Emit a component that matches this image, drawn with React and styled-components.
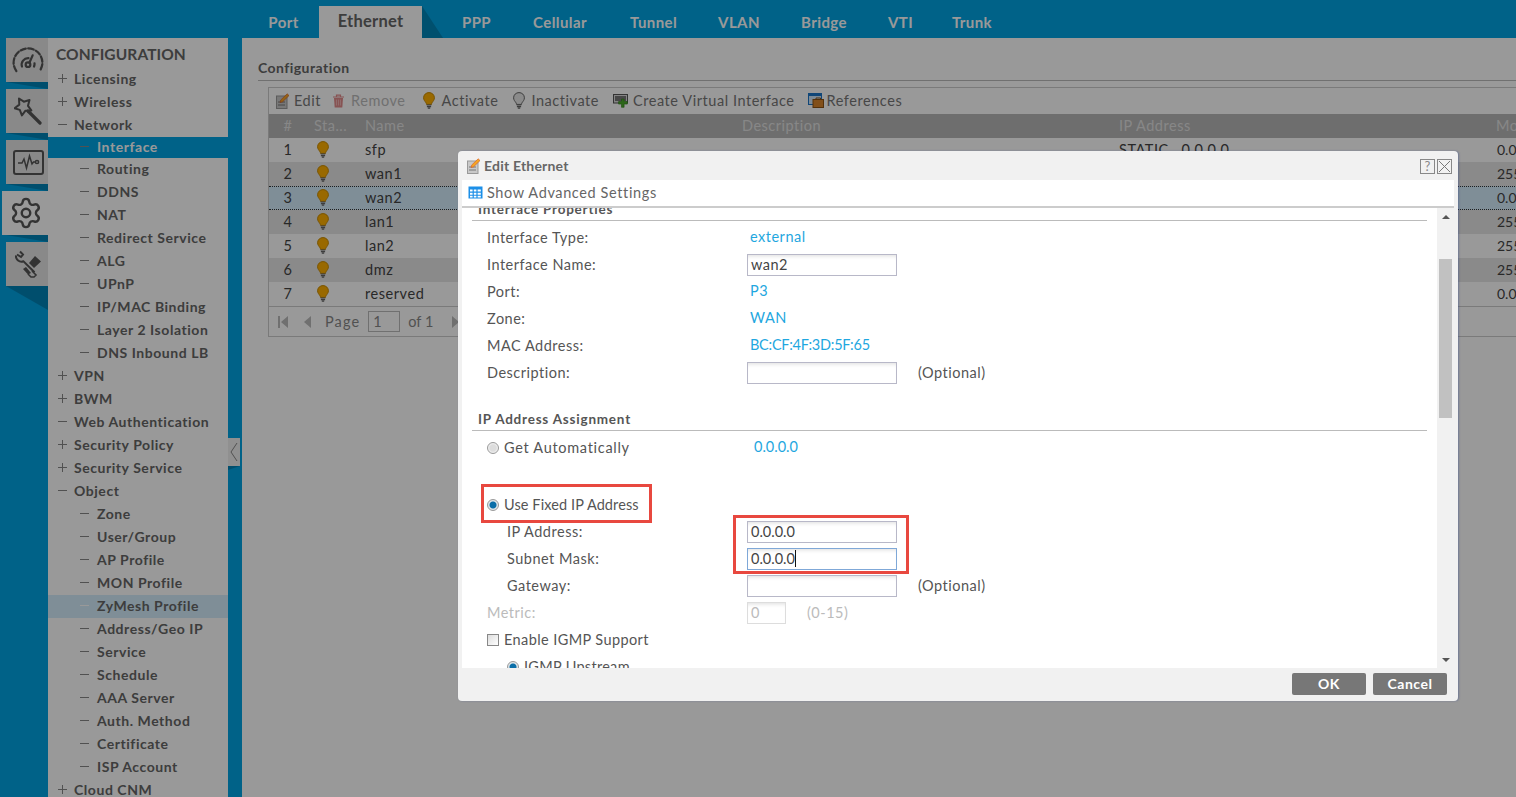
import React from "react";
import styled, { createGlobalStyle } from "styled-components";
import { Settings } from "lucide-react";

const Global = createGlobalStyle`
  html, body { margin: 0; padding: 0; background: #fff; }
  body { font-family: Lato, "Open Sans", sans-serif; color: #555; }
`;

const Page = styled.div`
  position: relative; width: 1516px; height: 797px; overflow: hidden;
  background: #00a3e3; display: flex; flex-direction: column;
`;
const TabBar = styled.div`
  height: 38px; padding-left: 248px; display: flex; align-items: flex-end; flex: none;
`;
const Tab = styled.div`
  position: relative; width: ${p => p.$w}px; height: 32px; flex: none;
  display: flex; align-items: center; justify-content: center;
  margin-right: ${p => (p.$active ? 21 : 0)}px;
  background: ${p => (p.$active ? "#fff" : "transparent")};
  color: ${p => (p.$active ? "#666" : "#fff")};
  font-size: ${p => (p.$active ? 16.5 : 15)}px; font-weight: 700;
  letter-spacing: ${p => (p.$active ? 0.25 : 0.4)}px;
  padding-bottom: ${p => (p.$active ? 3 : 0)}px; box-sizing: border-box;
  ${p => p.$active && `&::after { content: ""; position: absolute; left: 100%; top: 0; width: 21px; height: 32px;
    background: #0085b8; clip-path: polygon(0 0, 100% 100%, 0 100%); }`}
`;
const Main = styled.div`
  flex: 1; display: flex; min-height: 0;
`;
const Rail = styled.div`
  width: 48px; flex: none; display: flex; flex-direction: column; align-items: flex-end; gap: 7px;
`;
const RailTile = styled.div`
  position: relative; height: 44px; flex: none;
  width: ${p => (p.$active ? 46 : 42)}px;
  background: ${p => (p.$active ? "#fff" : "#e4e4e4")};
  display: flex; align-items: center; justify-content: center; color: #555;
  padding-left: ${p => (p.$active ? 2 : 2)}px; box-sizing: border-box;
  &::after {
    content: ""; position: absolute; left: ${p => (p.$active ? 4 : 0)}px; top: 100%; width: 42px;
    height: ${p => (p.$last ? 24 : 7)}px; background: #0083b6;
    clip-path: polygon(0 0, 100% 0, 100% 100%);
  }
`;
const Nav = styled.div`
  width: 180px; flex: none; background: #fff; overflow: hidden;
`;
const NavTitle = styled.div`
  height: 30px; padding: 1px 0 0 8px; box-sizing: border-box; font-size: 15.5px; font-weight: 700; color: #666;
  display: flex; align-items: center; letter-spacing: 0.1px;
`;
const NavRow = styled.div`
  height: ${p => (p.$active ? 21 : 23)}px; display: flex; align-items: center; box-sizing: border-box;
  padding-left: ${p => (p.$sub ? 32 : 10)}px; padding-bottom: 2px;
  font-size: 14px; font-weight: 700; letter-spacing: 0.55px;
  background: ${p => (p.$active ? "#00a3e3" : p.$hover ? "#d4edfc" : "transparent")};
  color: ${p => (p.$active ? "#fff" : "#666")};
`;
const Marker = styled.span`
  position: relative; width: 9px; height: 9px; flex: none; margin-right: ${p => (p.$sub ? 8 : 7)}px;
  &::before { content: ""; position: absolute; left: 0; right: 0; top: 4px; height: 1px;
    background: ${p => (p.$faint ? "#fff" : "#888")}; }
  ${p => p.$plus && `&::after { content: ""; position: absolute; top: 0; bottom: 0; left: 4px; width: 1px; background: #888; }`}
`;
const Strip = styled.div`
  width: 14px; flex: none;
`;
const Handle = styled.div`
  position: relative; width: 12px; height: 28px; margin-top: 400px; background: #f0f0f0;
  display: flex; align-items: center; justify-content: center; color: #888;
  &::after { content: ""; position: absolute; left: 0; top: 100%; width: 12px; height: 4px;
    background: #0083b6; clip-path: polygon(0 0, 100% 0, 0 100%); }
`;
const Content = styled.div`
  flex: 1; min-width: 0; background: #fff; padding: 20px 0 0 16px; overflow: hidden;
`;
const Heading = styled.div`
  height: 22px; box-sizing: content-box; border-bottom: 1px solid #bbb; font-size: 14px; font-weight: 700; color: #666;
  letter-spacing: 0.45px; display: flex; align-items: flex-start; line-height: 20px;
`;
const Panel = styled.div`
  margin: 6px 0 0 10px; width: 1300px; border: 1px solid #ccc; box-sizing: border-box;
`;
const Toolbar = styled.div`
  height: 26px; display: flex; align-items: center; padding: 0 0 1px 7px; box-sizing: border-box;
  font-size: 14.5px; color: #777; letter-spacing: 0.55px;
`;
const ToolItem = styled.div`
  display: flex; align-items: center; gap: ${p => p.$icon}px; margin-right: ${p => p.$gap}px;
  color: ${p => (p.$off ? "#bbb" : "#777")};
`;
const TableHead = styled.div`
  height: 24px; background: #b7b7b7; color: #e2e2e2; display: grid; padding-bottom: 1px; box-sizing: border-box;
  grid-template-columns: 38px 51px 377px 377px 377px 1fr; align-items: center;
  font-size: 14.5px; letter-spacing: 0.5px;
`;
const TableRow = styled.div`
  height: 24px; box-sizing: border-box; display: grid; padding-bottom: 1px;
  grid-template-columns: 38px 51px 377px 377px 377px 1fr; align-items: center;
  font-size: 14.5px; color: #444; letter-spacing: 0.55px;
  background: ${p => (p.$selected ? "#d4edfc" : p.$alt ? "#e6e6e6" : "#fff")};
  ${p => p.$selected && "border-top: 1px dotted #333; border-bottom: 1px dotted #333;"}
`;
const Num = styled.div` text-align: center; `;
const Cell = styled.div` padding-left: 7px; white-space: nowrap; `;
const MaskCell = styled(Cell)` padding-left: 8px; letter-spacing: 0; font-size: 14px; `;
const IconCell = styled.div` padding-left: 10px; display: flex; `;
const Pager = styled.div`
  height: 29px; border-top: 1px solid #ccc; display: flex; align-items: center;
  font-size: 14.5px; color: #888; letter-spacing: 0.5px;
`;
const PagerLabel = styled.span`
  margin-left: ${p => p.$ml}px; letter-spacing: ${p => p.$ls}px;
`;
const PagerBox = styled.div`
  width: 26px; height: 19px; border: 1px solid #bbb; margin: 0 8px 0 8px; padding-left: 4px;
  line-height: 19px; box-sizing: content-box;
`;
const PagerIcon = styled.svg` flex: none; margin-left: ${p => p.$ml}px; `;
const Overlay = styled.div`
  position: absolute; inset: 0; background: rgba(0, 0, 0, 0.4);
`;
const Dialog = styled.div`
  position: absolute; left: 458px; top: 151px; width: 1000px; height: 550px;
  background: #f1f1f1; border-radius: 4px; box-shadow: 1px 0 2px rgba(60,80,140,.45);
  display: flex; flex-direction: column; color: #444;
`;
const DialogHead = styled.div`
  height: 29px; flex: none; display: flex; align-items: center; padding: 0 6px 0 9px;
  font-size: 14px; font-weight: 700; color: #666; letter-spacing: 0.2px;
`;
const DialogTitle = styled.div` flex: 1; margin-left: 3px; `;
const HeadBtn = styled.div`
  width: 13px; height: 13px; border: 1px solid #888; margin: 2px 0 0 2px; color: #888;
  font-size: 13px; line-height: 13px; text-align: center; font-weight: 400;
  display: flex; align-items: center; justify-content: center;
`;
const DialogTools = styled.div`
  height: 26px; flex: none; margin: 0 4px; background: #fff; border-bottom: 2px solid #ccc;
  display: flex; align-items: center; padding: 0 0 2px 6px; gap: 4px; box-sizing: content-box;
  font-size: 14.5px; color: #666; letter-spacing: 0.62px; height: 24px;
`;
const DialogBody = styled.div`
  height: 460px; flex: none; margin: 0 4px; display: flex;
`;
const Form = styled.div`
  flex: 1; min-width: 0; background: #fff; overflow: hidden;
`;
const Scrollbar = styled.div`
  width: 17px; flex: none; display: flex; flex-direction: column; align-items: center; position: relative;
`;
const ArrowUp = styled.div`
  margin-top: 7px; width: 0; height: 0; border: 4px solid transparent; border-top: 0; border-bottom: 4px solid #555;
`;
const Thumb = styled.div`
  margin-top: 40px; width: 13px; height: 159px; background: #c1c1c1; flex: none;
`;
const ArrowDown = styled.div`
  margin-top: auto; margin-bottom: 6px; width: 0; height: 0; border: 4px solid transparent; border-bottom: 0; border-top: 4px solid #555;
`;
const Section = styled.div`
  margin: ${p => p.$top}px 10px ${p => p.$bottom}px; padding: 0 0 2px 6px; height: 21px; box-sizing: content-box; height: 19px; border-bottom: 1px solid #bbb;
  font-size: 13.5px; font-weight: 700; color: #555; letter-spacing: 0.78px; display: flex; align-items: center;
`;
const Row = styled.div`
  height: 27px; display: grid; align-items: center;
  padding-left: ${p => p.$indent + 25}px; margin-top: ${p => p.$top || 0}px;
  grid-template-columns: ${p => 260 - p.$indent}px 171px auto; justify-content: start;
  font-size: 14.5px; color: ${p => (p.$off ? "#bbb" : "#555")}; letter-spacing: 0.5px;
`;
const Value = styled.div`
  color: #1fa7e0; padding: 0 0 2px ${p => p.$pad}px; white-space: nowrap;
  letter-spacing: ${p => p.$ls ?? 0.5}px;
`;
const Field = styled.div`
  width: ${p => p.$w || 150}px; height: 22px; box-sizing: border-box; padding-left: 3px;
  border: 1px solid ${p => (p.$focus ? "#7fa8d8" : p.$off ? "#ddd" : "#b8b8c8")};
  box-shadow: inset 0 4px 4px -3px #ddd; line-height: 19px; color: ${p => (p.$off ? "#bbb" : "#444")};
  display: flex; align-items: center; letter-spacing: ${p => p.$ls ?? 0.5}px;
`;
const FieldGroup = styled.div` display: flex; align-items: center; gap: 21px; `;
const Caret = styled.span` width: 1px; height: 17px; background: #111; `;
const Hint = styled.div` white-space: nowrap; color: ${p => (p.$off ? "#bbb" : "#555")}; `;
const Choice = styled.div`
  display: flex; align-items: center; gap: 5px; white-space: nowrap; letter-spacing: ${p => p.$ls ?? 0.5}px;
`;
const Radio = styled.span`
  width: 12px; height: 12px; border-radius: 50%; box-sizing: border-box; flex: none;
  border: 1px solid #999; background: ${p => p.$on
    ? "radial-gradient(circle, #0a6ea8 0 3px, #dfe6ea 4px)" : "radial-gradient(circle, #ddd 0 3px, #f2f2f2 5px)"};
`;
const Check = styled.span`
  width: 12px; height: 12px; border: 1px solid #888; box-sizing: border-box; flex: none;
  background: linear-gradient(135deg, #ddd, #fff);
`;
const DialogFoot = styled.div`
  flex: 1; display: flex; justify-content: flex-end; gap: 7px; padding: 5px 11px 0 0;
`;
const Btn = styled.div`
  width: 74px; height: 22px; background: #777; border-radius: 2px; color: #fff; padding-bottom: 2px; box-sizing: border-box;
  font-size: 14px; font-weight: 700; display: flex; align-items: center; justify-content: center; letter-spacing: 0.5px;
`;
const RedFrame = styled.div`
  position: absolute; box-sizing: border-box; border: 3px solid #e8483f;
  left: ${p => p.$x}px; top: ${p => p.$y}px; width: ${p => p.$w}px; height: ${p => p.$h}px;
`;

const Bulb = ({ off }) => (
  <svg width="12" height="18" viewBox="0 0 12 18">
    <path d="M6 .6C2.9.6.6 2.9.6 5.8c0 2.3 1.4 3.4 2.4 5 .4.7.5 1.1.5 1.6h5c0-.5.1-.9.5-1.6 1-1.6 2.400-2.700 2.400-5C11.400 2.900 9.100.6 6 .6z"
      fill={off ? "#e8e8e8" : "#ffb000"} stroke={off ? "#666" : "#c98a00"} strokeWidth="1" />
    <path d="M3.7 13h4.6M3.9 14.6h4.2M4.8 16.2h2.4" stroke="#666" strokeWidth="1.2" />
  </svg>
);
const EditIcon = () => (
  <svg width="14" height="16" viewBox="0 0 14 16">
    <rect x="0.5" y="3" width="10.5" height="12.5" fill="#c9c9c9" stroke="#999" />
    <path d="M2 9h7M2 12h7" stroke="#777" strokeWidth="1" />
    <path d="M4 9.5l.8-2.600L11.200.8 13 2.600 6.600 8.800z" fill="#f5a623" stroke="#d9541e" strokeWidth=".6" />
  </svg>
);
const TrashIcon = () => (
  <svg width="13" height="14" viewBox="0 0 13 14">
    <path d="M1 3h11M4.500 3V1.200h4V3" stroke="#e28a8a" strokeWidth="1.2" fill="none" />
    <path d="M2 4h9l-.7 9.500H2.700z" fill="#e28a8a" />
    <path d="M4.500 5.500v6M6.500 5.500v6M8.500 5.500v6" stroke="#f5c5c5" strokeWidth=".7" />
  </svg>
);
const VirtualIcon = () => (
  <svg width="16" height="14" viewBox="0 0 16 14">
    <rect x=".5" y=".5" width="14" height="8.500" fill="#ddd" stroke="#555" />
    <rect x="2" y="2" width="11" height="5" fill="#777" />
    <path d="M8.500 5h2.600v2.500h3.200v2.600h-3.200v3.200H8.500v-3.200H5.600V7.500h2.900z" fill="#4caa2a" stroke="#2d7d17" strokeWidth=".6" />
  </svg>
);
const RefIcon = () => (
  <svg width="16" height="15" viewBox="0 0 16 15">
    <rect x=".5" y=".5" width="13" height="11" fill="#cfe6fb" stroke="#1c76c8" />
    <rect x=".5" y=".5" width="13" height="2.500" fill="#1c76c8" />
    <rect x="5" y="6.500" width="10.500" height="8" fill="#d9842a" stroke="#8d5213" />
    <path d="M8 6.500V5h4.500v1.500" stroke="#8d5213" fill="none" />
  </svg>
);
const TableIcon = () => (
  <svg width="15" height="13" viewBox="0 0 15 13">
    <rect x=".5" y=".5" width="14" height="12" fill="#1c8fe8" />
    <path d="M2 3.500h2.600v2H2zM5.800 3.500h2.600v2H5.800zM9.600 3.500h3.200v2H9.600zM2 6.800h2.600v2H2zM5.800 6.800h2.600v2H5.800zM9.600 6.800h3.200v2H9.600zM2 9.800h2.600v1.600H2zM5.800 9.800h2.600v1.600H5.800zM9.600 9.800h3.200v1.600H9.600z" fill="#fff" />
  </svg>
);
const GaugeIcon = () => (
  <svg width="32" height="26" viewBox="0 0 34 28" fill="none" stroke="#555" strokeWidth="2.400" strokeLinecap="round">
    <path d="M4.500 26C2.500 23 1.500 20 1.500 17 1.500 8.400 8.400 1.500 17 1.500S32.500 8.400 32.500 17c0 3-1 6-3 9" strokeDasharray="6 2.500" />
    <path d="M10.500 21a7 7 0 0 1 7-9" />
    <path d="M24 17.500a7 7 0 0 1-.5 3.500" />
    <circle cx="17" cy="19" r="2.500" />
    <path d="M18.500 17l3.500-8" />
  </svg>
);
const WandIcon = () => (
  <svg width="28" height="28" viewBox="0 0 28 28" fill="none" stroke="#555" strokeWidth="2" strokeLinejoin="round" strokeLinecap="round">
    <path d="M5 1.500l4.800 3.200 5.700-1.700-1.500 5.800 3.300 4.600-5.800.3-3.600 4.700-2.100-5.500L.6 11.200l4.700-3.600z" />
    <path d="M14 14l12 12" strokeWidth="3.200" />
  </svg>
);
const PulseIcon = () => (
  <svg width="31" height="25" viewBox="0 0 31 25" fill="none" stroke="#555">
    <rect x="1" y="1" width="29" height="23" rx="2" strokeWidth="2" />
    <path d="M5 13h4l2-4 2.500 9 3-12 2.500 8 1.500-2h2" strokeWidth="1.500" />
    <circle cx="24" cy="12" r="1.600" strokeWidth="1.500" />
  </svg>
);
const ToolsIcon = () => (
  <svg width="28" height="28" viewBox="0 0 28 28">
    <path d="M2 5.500a5.500 5.500 0 0 0 7.500 5.800l11 11" fill="none" stroke="#555" strokeWidth="2" />
    <path d="M3 4.500L7 7l2-2.500L6 1.500" fill="none" stroke="#555" strokeWidth="2" />
    <path d="M15 13l6-7 6 5.500-7 6.500z" fill="#555" />
    <path d="M9 19l5 5.500 3-1.500-5-6z" fill="#555" />
    <path d="M14 24l3 3h3l2-2-4-4" fill="none" stroke="#555" strokeWidth="1.600" />
  </svg>
);

const tabs = [["Port", 71], ["Ethernet", 103, true], ["PPP", 67], ["Cellular", 100], ["Tunnel", 87], ["VLAN", 84], ["Bridge", 86], ["VTI", 67], ["Trunk", 76]];
const nav = [
  ["Licensing", "plus"], ["Wireless", "plus"], ["Network", "minus"],
  ["Interface", "sub", "active"], ["Routing", "sub"], ["DDNS", "sub"], ["NAT", "sub"], ["Redirect Service", "sub"],
  ["ALG", "sub"], ["UPnP", "sub"], ["IP/MAC Binding", "sub"], ["Layer 2 Isolation", "sub"], ["DNS Inbound LB", "sub"],
  ["VPN", "plus"], ["BWM", "plus"], ["Web Authentication", "minus"], ["Security Policy", "plus"], ["Security Service", "plus"],
  ["Object", "minus"], ["Zone", "sub"], ["User/Group", "sub"], ["AP Profile", "sub"], ["MON Profile", "sub"],
  ["ZyMesh Profile", "sub", "hover"], ["Address/Geo IP", "sub"], ["Service", "sub"], ["Schedule", "sub"], ["AAA Server", "sub"],
  ["Auth. Method", "sub"], ["Certificate", "sub"], ["ISP Account", "sub"], ["Cloud CNM", "plus"],
];
const rows = [["sfp", "0.0"], ["wan1", "255"], ["wan2", "0.0"], ["lan1", "255"], ["lan2", "255"], ["dmz", "255"], ["reserved", "0.0"]];
const rail = [<GaugeIcon />, <WandIcon />, <PulseIcon />, <Settings size={34} strokeWidth={1.7} />, <ToolsIcon />];

export default function App() {
  return (
    <Page>
      <Global />
      <TabBar>
        {tabs.map(([t, w, a]) => <Tab key={t} $w={w} $active={a}>{t}</Tab>)}
      </TabBar>
      <Main>
        <Rail>
          {rail.map((ic, i) => <RailTile key={i} $active={i === 3} $last={i === 4}>{ic}</RailTile>)}
        </Rail>
        <Nav>
          <NavTitle>CONFIGURATION</NavTitle>
          {nav.map(([t, k, s]) => (
            <NavRow key={t} $sub={k === "sub"} $active={s === "active"} $hover={s === "hover"}>
              <Marker $plus={k === "plus"} $sub={k === "sub"} $faint={s === "hover"} />{t}
            </NavRow>
          ))}
        </Nav>
        <Strip>
          <Handle>
            <svg width="8" height="20" viewBox="0 0 8 20"><path d="M7 1L1 10l6 9" fill="none" stroke="#888" /></svg>
          </Handle>
        </Strip>
        <Content>
          <Heading>Configuration</Heading>
          <Panel>
            <Toolbar>
              <ToolItem $icon={4} $gap={11}><EditIcon />Edit</ToolItem>
              <ToolItem $icon={6} $gap={17} $off><TrashIcon />Remove</ToolItem>
              <ToolItem $icon={7} $gap={15}><Bulb />Activate</ToolItem>
              <ToolItem $icon={6} $gap={14}><Bulb off />Inactivate</ToolItem>
              <ToolItem $icon={4} $gap={13}><VirtualIcon />Create Virtual Interface</ToolItem>
              <ToolItem $icon={3} $gap={0}><RefIcon />References</ToolItem>
            </Toolbar>
            <TableHead>
              <Num>#</Num><Cell>Sta...</Cell><Cell>Name</Cell><Cell>Description</Cell><Cell>IP Address</Cell><Cell>Mo</Cell>
            </TableHead>
            {rows.map(([n, m], i) => (
              <TableRow key={n} $alt={i % 2 === 1} $selected={i === 2}>
                <Num>{i + 1}</Num>
                <IconCell><Bulb /></IconCell>
                <Cell>{n}</Cell><Cell />
                <Cell>{i === 0 ? "STATIC\u00a0\u00a0\u00a00.0.0.0" : ""}</Cell>
                <MaskCell>{m}</MaskCell>
              </TableRow>
            ))}
            <Pager>
              <PagerIcon $ml={8} width="12" height="14" viewBox="0 0 12 14"><path d="M1 1h2v12H1zM11 1v12L4 7z" fill="#bbb" /></PagerIcon>
              <PagerIcon $ml={14} width="9" height="14" viewBox="0 0 9 14"><path d="M8 1v12L1 7z" fill="#bbb" /></PagerIcon>
              <PagerLabel $ml={13} $ls={1.1}>Page</PagerLabel>
              <PagerBox>1</PagerBox>
              <PagerLabel $ml={0} $ls={0.1}>of 1</PagerLabel>
              <PagerIcon $ml={17} width="9" height="14" viewBox="0 0 9 14"><path d="M1 1v12l7-6z" fill="#bbb" /></PagerIcon>
            </Pager>
          </Panel>
        </Content>
      </Main>
      <Overlay />
      <Dialog>
        <DialogHead>
          <EditIcon />
          <DialogTitle>Edit Ethernet</DialogTitle>
          <HeadBtn>?</HeadBtn>
          <HeadBtn>
            <svg width="11" height="11" viewBox="0 0 11 11"><path d="M0 0l11 11M11 0L0 11" stroke="#777" /></svg>
          </HeadBtn>
        </DialogHead>
        <DialogTools><TableIcon />Show Advanced Settings</DialogTools>
        <DialogBody>
          <Form>
            <Section $top={-9} $bottom={3}>Interface Properties</Section>
            <Row $indent={0}>Interface Type:<Value $pad={3}>external</Value></Row>
            <Row $indent={0}>Interface Name:<Field>wan2</Field></Row>
            <Row $indent={0}>Port:<Value $pad={3}>P3</Value></Row>
            <Row $indent={0}>Zone:<Value $pad={3}>WAN</Value></Row>
            <Row $indent={0}>MAC Address:<Value $pad={3} $ls={-0.26}>BC:CF:4F:3D:5F:65</Value></Row>
            <Row $indent={0}>Description:<Field /><Hint>(Optional)</Hint></Row>
            <Section $top={23} $bottom={3}>IP Address Assignment</Section>
            <Row $indent={0}><Choice $ls={0.7}><Radio />Get Automatically</Choice><Value $pad={7} $ls={0}>0.0.0.0</Value></Row>
            <Row $indent={0} $top={30}><Choice $ls={0.1}><Radio $on />Use Fixed IP Address</Choice></Row>
            <Row $indent={20}>IP Address:<Field $ls={0}>0.0.0.0</Field></Row>
            <Row $indent={20}>Subnet Mask:<Field $focus $ls={0}>0.0.0.0<Caret /></Field></Row>
            <Row $indent={20}>Gateway:<Field /><Hint>(Optional)</Hint></Row>
            <Row $indent={0} $off>Metric:<FieldGroup><Field $w={39} $off>0</Field><Hint $off>(0-15)</Hint></FieldGroup></Row>
            <Row $indent={0}><Choice $ls={0.4}><Check />Enable IGMP Support</Choice></Row>
            <Row $indent={20}><Choice $ls={0.3}><Radio $on />IGMP Upstream</Choice></Row>
          </Form>
          <Scrollbar>
            <ArrowUp />
            <Thumb />
            <ArrowDown />
          </Scrollbar>
        </DialogBody>
        <DialogFoot><Btn>OK</Btn><Btn>Cancel</Btn></DialogFoot>
        <RedFrame $x={23} $y={333} $w={171} $h={39} />
        <RedFrame $x={275} $y={364} $w={176} $h={59} />
      </Dialog>
    </Page>
  );
}
